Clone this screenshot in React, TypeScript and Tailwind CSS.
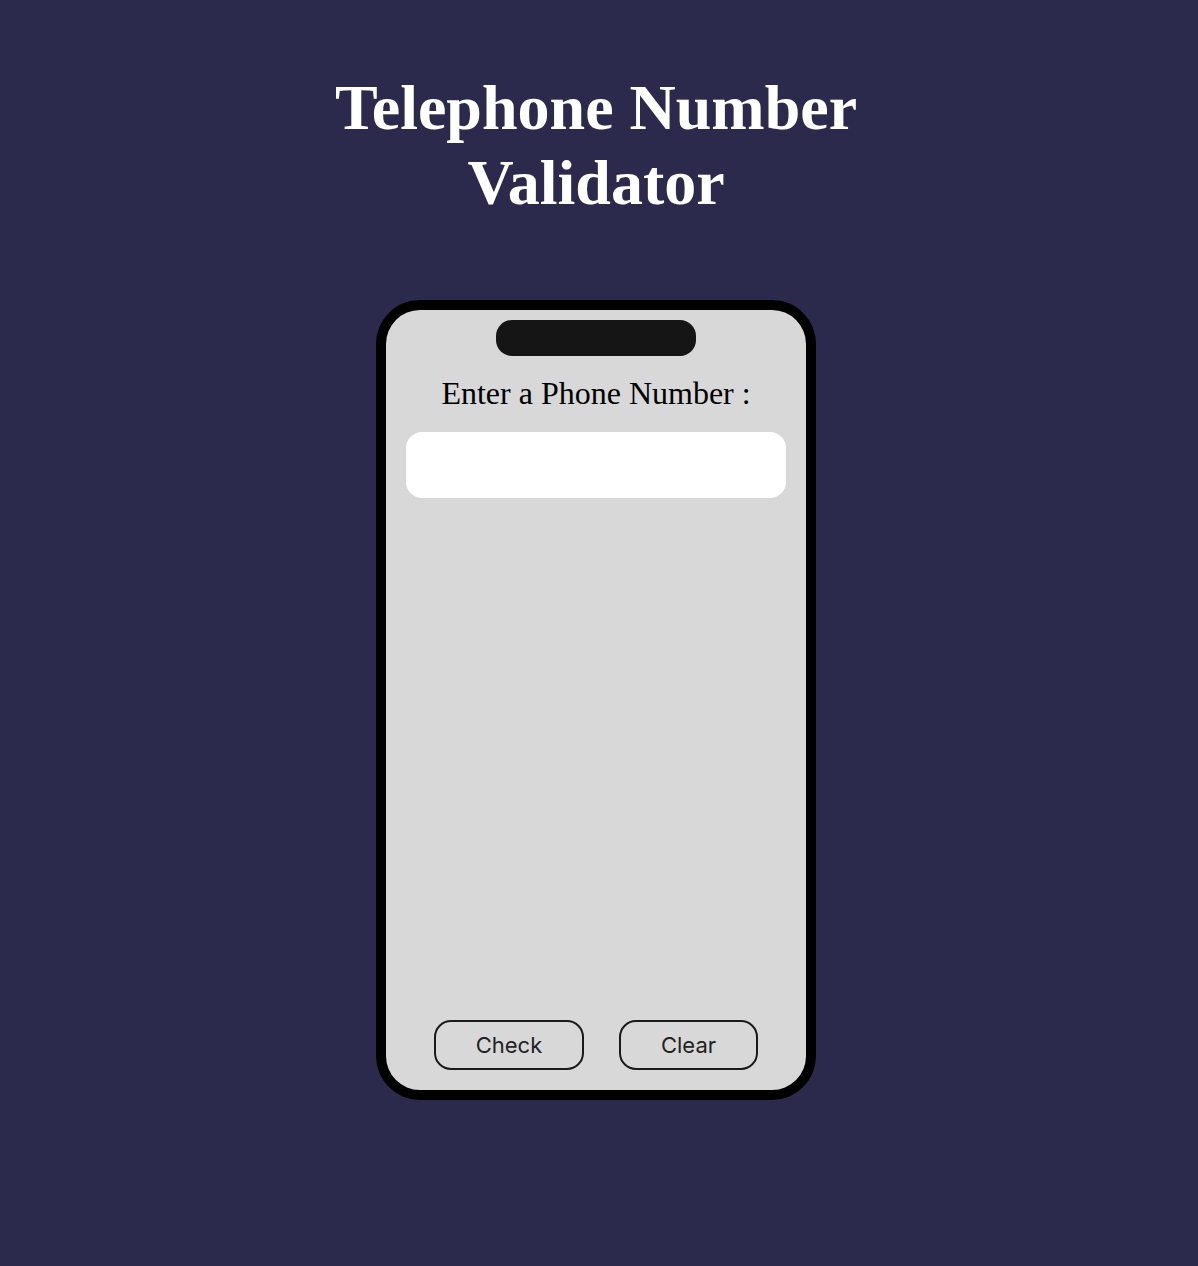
export default function App() {
  return (
    <div className="min-h-[1266px] w-full bg-[#2b2a4c] flex flex-col items-center pt-[70px] pr-[6px]">
      <h1 className="text-white text-center font-bold text-[64px] leading-[75px] font-['Liberation_Serif',serif] w-[600px]">
        Telephone Number Validator
      </h1>

      {/* Phone */}
      <div className="mt-[80px] w-[440px] h-[800px] bg-black rounded-[44px] p-[10px]">
        <div className="w-full h-full bg-[#d8d8d8] rounded-[34px] flex flex-col items-center px-5 pt-[10px] pb-5">
          <div className="w-[200px] h-[36px] bg-[#151515] rounded-[16px]" />
          <label className="mt-[18px] text-[32px] leading-[38px] text-black font-['Liberation_Serif',serif]">
            Enter a Phone Number :
          </label>
          <input
            type="text"
            className="mt-[20px] w-full h-[66px] bg-white rounded-[16px] outline-none px-4 text-[22px]"
          />
          <div className="mt-auto flex gap-[35px]">
            <button className="w-[150px] h-[50px] border-2 border-[#1a1a1a] rounded-[17px] text-[22px] text-[#222] font-['Inter',sans-serif]">
              Check
            </button>
            <button className="w-[139px] h-[50px] border-2 border-[#1a1a1a] rounded-[17px] text-[22px] text-[#222] font-['Inter',sans-serif]">
              Clear
            </button>
          </div>
        </div>
      </div>
    </div>
  );
}
